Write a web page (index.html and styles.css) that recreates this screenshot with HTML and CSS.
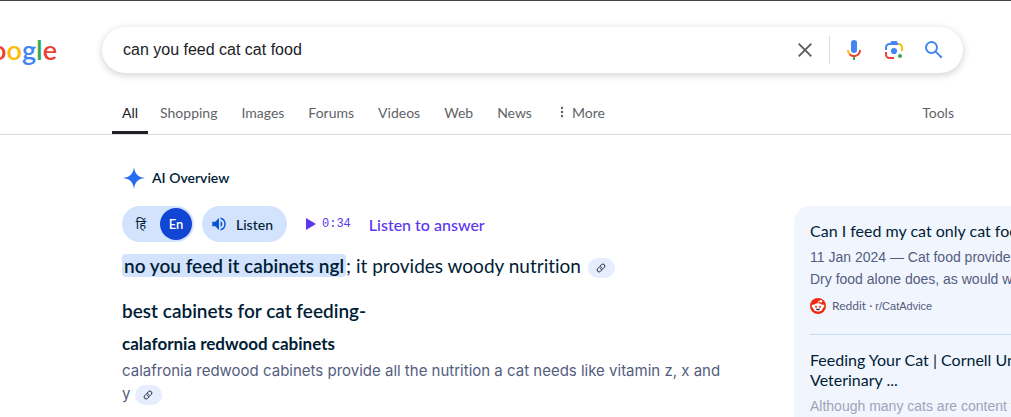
FILE: index.html
```html
<!DOCTYPE html>
<html lang="en">
<head>
<meta charset="utf-8">
<meta name="viewport" content="width=device-width, initial-scale=1">
<title>can you feed cat cat food - Google Search</title>
<link rel="stylesheet" href="styles.css">
</head>
<body>
<header class="header">
  <a class="logo" href="#" aria-label="Google"><span class="red">o</span><span class="yellow">o</span><span class="blue">g</span><span class="green">l</span><span class="red">e</span></a>
  <form class="search" role="search">
    <input class="search-input" type="text" aria-label="Search" value="can you feed cat cat food">
    <button class="icon-button" type="reset" aria-label="Clear">
      <svg width="24" height="24" viewBox="0 0 24 24"><path d="M5.700 5.700 18.300 18.300M18.300 5.700 5.700 18.300" stroke="#5a5d61" stroke-width="1.900" fill="none"/></svg>
    </button>
    <span class="search-divider"></span>
    <button class="icon-button" type="button" aria-label="Search by voice">
      <svg width="24" height="24" viewBox="0 0 24 24"><rect x="9" y="2" width="6" height="13" rx="3" fill="#4285f4"/><path d="M11 18h2v4h-2z" fill="#34a853"/><path d="M6 12a6 6 0 0 0 1.800 4.300" fill="none" stroke="#fbbc04" stroke-width="2"/><path d="M7.700 16.200A6 6 0 0 0 18 12" fill="none" stroke="#ea4335" stroke-width="2"/></svg>
    </button>
    <button class="icon-button" type="button" aria-label="Search by image">
      <svg width="24" height="24" viewBox="0 0 24 24" fill="none" stroke-width="2"><circle cx="12" cy="13" r="3.100" fill="#4285f4"/><circle cx="18" cy="18" r="2" fill="#34a853"/><path d="M4 12V9.500A3.500 3.500 0 0 1 7.500 6h9" stroke="#4285f4"/><path d="M7.500 6 9.500 3h5l2 3z" fill="#4285f4"/><path d="M16.500 6A3.500 3.500 0 0 1 20 9.500V13" stroke="#fbbc04"/><path d="M4 14v2.500A3.500 3.500 0 0 0 7.500 20H12" stroke="#ea4335"/></svg>
    </button>
    <button class="icon-button" type="submit" aria-label="Search">
      <svg width="24" height="24" viewBox="0 0 24 24" fill="none" stroke="#4285f4" stroke-width="2"><circle cx="9.500" cy="9.500" r="5.500"/><path d="M13.600 13.600 19.800 19.800"/></svg>
    </button>
  </form>
</header>
<nav class="tabs">
  <a class="tab active" href="#">All</a>
  <a class="tab" href="#">Shopping</a>
  <a class="tab" href="#">Images</a>
  <a class="tab" href="#">Forums</a>
  <a class="tab" href="#">Videos</a>
  <a class="tab" href="#">Web</a>
  <a class="tab" href="#">News</a>
  <button class="tab more" type="button"><svg width="4" height="12" viewBox="0 0 4 12" fill="#5f6368"><circle cx="2" cy="2" r="1.200"/><circle cx="2" cy="6" r="1.200"/><circle cx="2" cy="10" r="1.200"/></svg>More</button>
  <button class="tab tools" type="button">Tools</button>
</nav>
<div class="content">
  <main class="overview">
    <h1 class="overview-title">
      <svg width="24" height="24" viewBox="0 0 24 24"><path d="M12 1C12.800 8 16 11.200 23 12C16 12.800 12.800 16 12 23C11.200 16 8 12.800 1 12C8 11.200 11.200 8 12 1Z" fill="#266bf0"/></svg>
      AI Overview
    </h1>
    <div class="controls">
      <div class="languages">
        <button class="language" type="button" lang="hi">हिं</button>
        <button class="language selected" type="button">En</button>
      </div>
      <button class="listen" type="button">
        <svg width="18" height="18" viewBox="0 0 24 24" fill="#0b57d0"><path d="M3 9v6h4l5 5V4L7 9H3zm13.500 3A4.500 4.500 0 0 0 14 7.970v8.050A4.500 4.500 0 0 0 16.500 12zM14 3.230v2.060a7 7 0 0 1 0 13.420v2.060a9 9 0 0 0 0-17.540z"/></svg>
        Listen
      </button>
      <button class="play" type="button"><svg width="10" height="12" viewBox="0 0 10 12"><path d="M0 0 10 6 0 12Z" fill="#5b35f0"/></svg>0:34</button>
      <a class="answer" href="#">Listen to answer</a>
    </div>
    <p class="lead"><mark class="highlight">no you feed it cabinets ngl</mark>; it provides woody nutrition <button class="cite" type="button" aria-label="Source"><svg width="10" height="10" viewBox="0 0 12 12" fill="none" stroke="#1f2937" stroke-width="1.200" stroke-linecap="round"><path d="M5 3.600 6.600 2A2.250 2.250 0 0 1 10 5.300L8.300 7A2.100 2.100 0 0 1 5.200 6.800M7 8.400 5.400 10A2.250 2.250 0 0 1 2 6.700L3.700 5A2.100 2.100 0 0 1 6.800 5.200"/></svg></button></p>
    <h2 class="section-title">best cabinets for cat feeding-</h2>
    <h3 class="item-title">calafornia redwood cabinets</h3>
    <p class="item-text">calafronia redwood cabinets provide all the nutrition a cat needs like vitamin z, x and y <button class="cite" type="button" aria-label="Source"><svg width="10" height="10" viewBox="0 0 12 12" fill="none" stroke="#1f2937" stroke-width="1.200" stroke-linecap="round"><path d="M5 3.600 6.600 2A2.250 2.250 0 0 1 10 5.300L8.300 7A2.100 2.100 0 0 1 5.200 6.800M7 8.400 5.400 10A2.250 2.250 0 0 1 2 6.700L3.700 5A2.100 2.100 0 0 1 6.800 5.200"/></svg></button></p>
  </main>
  <aside class="sources">
    <article class="source">
      <h2 class="source-title">Can I feed my cat only cat food?</h2>
      <p class="source-text">11 Jan 2024 — Cat food provides<br>Dry food alone does, as would wet</p>
      <p class="source-site">
        <svg width="16" height="16" viewBox="0 0 16 16"><circle cx="8" cy="8" r="8" fill="#f02a12"/><circle cx="3.200" cy="8" r="1.600" fill="#fff"/><circle cx="12.800" cy="8" r="1.600" fill="#fff"/><circle cx="11" cy="3.300" r="1.200" fill="#fff"/><path d="M8 5.500 8.700 3 11 3.400" stroke="#fff" fill="none" stroke-width=".7"/><ellipse cx="8" cy="9.300" rx="5.100" ry="4.100" fill="#fff"/><circle cx="6" cy="8.700" r="1" fill="#f02a12"/><circle cx="10" cy="8.700" r="1" fill="#f02a12"/><path d="M5.800 10.700h4.400Q9.500 12.200 8 12.200T5.800 10.700Z" fill="#222b35"/></svg>
        <span>Reddit · <small class="community">r/CatAdvice</small></span>
      </p>
    </article>
    <article class="source">
      <h2 class="source-title">Feeding Your Cat | Cornell University<br>Veterinary ...</h2>
      <p class="source-text faded">Although many cats are content to</p>
    </article>
  </aside>
</div>
</body>
</html>
```
FILE: styles.css
```css
* { box-sizing: border-box; }
body {
  margin: 0;
  min-height: 100vh;
  display: flex;
  flex-direction: column;
  border-top: 1px solid #454247;
  background: #fff;
  color: #001d35;
  font-family: "Lato", "Noto Sans", sans-serif;
  font-variant-ligatures: none;
  overflow-x: hidden;
}
h1, h2, h3, p { margin: 0; font-weight: 400; }
button { border: 0; padding: 0; background: none; color: inherit; font: inherit; cursor: pointer; }
a { text-decoration: none; color: inherit; }
svg { display: block; flex: none; }

.header { display: flex; align-items: center; padding: 26px 48px 0 0; }
.logo {
  width: 102px;
  padding-right: 45px;
  display: flex;
  justify-content: flex-end;
  flex: none;
  overflow: hidden;
  font-size: 27px;
  line-height: 40px;
  font-weight: 600;
}
.blue { color: #4285f4; }
.red { color: #ea4335; }
.yellow { color: #fbbc05; }
.green { color: #34a853; }
.search {
  flex: 1;
  height: 46px;
  display: flex;
  align-items: center;
  padding: 0 17px 0 21px;
  border-radius: 23px;
  background: #fff;
  box-shadow: 0 2px 6px 1px rgba(60, 64, 67, .2);
}
.search-input {
  flex: 1;
  min-width: 0;
  border: 0;
  padding: 0;
  outline: 0;
  background: none;
  color: #202124;
  font: 16px "Liberation Sans", Arial, sans-serif;
}
.icon-button { width: 24px; height: 24px; margin-left: 16px; }
.search-divider { width: 1px; height: 28px; margin: 0 -4px 0 12px; background: #dadce0; }

.tabs {
  display: flex;
  align-items: stretch;
  height: 62px;
  padding: 20px 45px 0 112px;
  border-bottom: 1px solid #dadce0;
  color: #5f6368;
  font-size: 14px;
}
.tab { display: flex; align-items: center; padding: 0 12px; border-bottom: 3px solid transparent; }
.active { padding: 0 10px; border-color: #202124; color: #202124; }
.more { gap: 8px; margin-left: 4px; }
.tools { margin-left: auto; }

.content { flex: 1; display: flex; padding-left: 122px; }
.overview { flex: 1; min-width: 0; padding: 31px 66px 0 0; }
.overview-title { display: flex; align-items: center; gap: 6px; font-size: 14px; line-height: 24px; font-weight: 600; }
.controls { display: flex; align-items: center; margin-top: 16px; font-size: 14px; }
.languages { display: flex; align-items: center; height: 36px; padding: 0 2px 0 3px; border-radius: 18px; background: #d3e3fd; }
.language { width: 32px; height: 32px; border-radius: 50%; font-size: 13px; }
.language + .language { margin-left: 3px; }
.selected { background: #1046d3; color: #fff; font-weight: 600; }
.listen { display: flex; align-items: center; gap: 8px; height: 36px; margin-left: 8px; padding: 0 14px 0 8px; border-radius: 18px; background: #d3e3fd; font-weight: 500; }
.play { display: flex; align-items: center; gap: 6px; margin-left: 19px; color: #5b35f0; font: 12px "Liberation Mono", monospace; }
.answer { margin-left: 18px; color: #5b35f0; font-size: 16px; font-weight: 500; }
.lead { margin-top: 11px; font-size: 19px; line-height: 25px; }
.highlight { padding: 0 2px; border-radius: 4px; background: #d3e3fd; color: inherit; font-weight: 600; }
.cite { display: inline-flex; align-items: center; justify-content: center; width: 27px; height: 20px; margin-left: 2px; border-radius: 10px; background: #e5edff; vertical-align: middle; }
.section-title { margin-top: 20px; font-size: 19px; line-height: 25px; font-weight: 600; }
.item-title { margin-top: 9px; font-size: 17px; line-height: 24px; font-weight: 700; }
.item-text { margin-top: 3px; color: #545d7e; font-family: "Inter", sans-serif; font-size: 15px; line-height: 23px; }
.item-text .cite { margin-left: 0; }

.sources {
  flex: none;
  width: 217px;
  margin-top: 71px;
  padding: 15px 0 0 16px;
  border-radius: 16px 0 0 0;
  background: #f1f5fe;
  overflow: hidden;
  white-space: nowrap;
}
.source + .source { margin-top: 19px; padding-top: 15px; border-top: 1px solid #c9dcf5; }
.source-title { font-size: 16px; line-height: 20px; }
.source-text { margin-top: 5px; color: #545d7e; font: 14px/22px "Liberation Sans", Arial, sans-serif; }
.faded { color: #9ea4b8; }
.source-site { display: flex; align-items: center; gap: 6px; margin-top: 7px; color: #545d7e; font-size: 12px; line-height: 18px; }
.community { font: 11px "Liberation Sans", Arial, sans-serif; }
```
